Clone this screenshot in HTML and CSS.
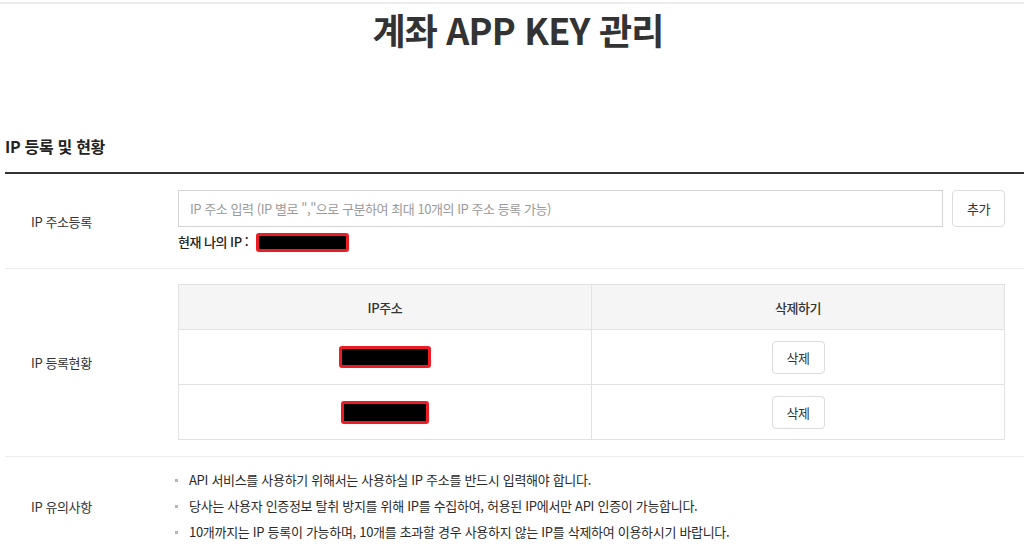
FILE: index.html
```html
<!DOCTYPE html>
<html lang="ko">
<head>
<meta charset="utf-8">
<title>계좌 APP KEY 관리</title>
<link rel="stylesheet" href="styles.css">
</head>
<body>
<div class="topline"></div>
<h1 class="page-title">계좌 APP KEY 관리</h1>
<h2 class="section-title">IP 등록 및 현황</h2>
<div class="form">
  <div class="row row-register">
    <div class="label">IP 주소등록</div>
    <div class="content">
      <div class="input-line">
        <input class="ip-input" type="text" placeholder="IP 주소 입력 (IP 별로 &quot;,&quot;으로 구분하여 최대 10개의 IP 주소 등록 가능)">
        <button class="btn btn-add">추가</button>
      </div>
      <div class="my-ip">현재 나의 IP : <span class="redact redact-a"></span></div>
    </div>
  </div>
  <div class="row row-list">
    <div class="label">IP 등록현황</div>
    <div class="content">
      <table class="ip-table">
        <thead>
          <tr><th>IP주소</th><th>삭제하기</th></tr>
        </thead>
        <tbody>
          <tr class="r1"><td><span class="redact redact-b"></span></td><td><button class="btn btn-del">삭제</button></td></tr>
          <tr class="r2"><td><span class="redact redact-c"></span></td><td><button class="btn btn-del">삭제</button></td></tr>
        </tbody>
      </table>
    </div>
  </div>
  <div class="row row-notice">
    <div class="label">IP 유의사항</div>
    <div class="content">
      <ul class="notes">
        <li>API 서비스를 사용하기 위해서는 사용하실 IP 주소를 반드시 입력해야 합니다.</li>
        <li>당사는 사용자 인증정보 탈취 방지를 위해 IP를 수집하여, 허용된 IP에서만 API 인증이 가능합니다.</li>
        <li>10개까지는 IP 등록이 가능하며, 10개를 초과할 경우 사용하지 않는 IP를 삭제하여 이용하시기 바랍니다.</li>
      </ul>
    </div>
  </div>
</div>
</body>
</html>
```
FILE: styles.css
```css
* { box-sizing: border-box; }
html, body { margin: 0; padding: 0; background: #fff; }
body {
  font-family: "Noto Sans CJK KR", "Noto Sans", sans-serif;
  color: #333;
  font-size: 13px;
  overflow: hidden;
}
.topline {
  margin-top: 2px;
  height: 2px;
  background: #ebebeb;
}
.page-title {
  margin: 0;
  padding-top: 5px;
  padding-left: 12px;
  font-size: 36px;
  line-height: 40px;
  font-weight: 700;
  text-align: center;
  letter-spacing: -0.8px;
  color: #333;
}
.section-title {
  margin: 87px 0 16px 5px;
  font-size: 16px;
  line-height: 20px;
  font-weight: 700;
  letter-spacing: -0.3px;
  color: #222;
}
.form {
  margin-left: 5px;
  border-top: 2px solid #333;
}
.row {
  display: flex;
  align-items: center;
  border-bottom: 1px solid #ececec;
  padding-right: 19px;
}
.label {
  width: 173px;
  flex: none;
  padding-left: 26px;
  letter-spacing: -0.4px;
  color: #333;
}
.content { flex: 1; min-width: 0; }
.row-register { padding-top: 16px; padding-bottom: 16px; }
.input-line { display: flex; gap: 9px; }
.ip-input {
  flex: 1;
  height: 37px;
  border: 1px solid #d4d4d4;
  padding: 0 11px;
  font-family: inherit;
  font-size: 13px;
  letter-spacing: -0.45px;
  color: #333;
  outline: none;
}
.ip-input::placeholder { color: #9a9a9a; }
.btn {
  width: 53px;
  background: #fff;
  border: 1px solid #dcdcdc;
  border-radius: 4px;
  font-family: inherit;
  font-size: 13px;
  color: #333;
  letter-spacing: -0.5px;
  padding: 0;
  cursor: pointer;
}
.btn-add { height: 37px; }
.btn-del { height: 33px; }
.my-ip {
  margin-top: 5px;
  height: 20px;
  line-height: 20px;
  font-weight: 500;
  letter-spacing: -0.5px;
  display: flex;
  align-items: center;
  gap: 8px;
  color: #222;
}
.redact {
  display: inline-block;
  background: #000;
  border: 3px solid #ec1c24;
  border-radius: 3px;
}
.redact-a { width: 93px; height: 19px; }
.redact-b { width: 92px; height: 22px; }
.redact-c { width: 88px; height: 23px; }
.row-list { padding-top: 15px; padding-bottom: 16px; }
.ip-table {
  width: 100%;
  border-collapse: collapse;
  table-layout: fixed;
  border: 1px solid #e2e2e2;
}
.ip-table th, .ip-table td {
  border: 1px solid #e2e2e2;
  text-align: center;
  vertical-align: middle;
  padding: 0;
}
.ip-table th {
  background: #f5f5f5;
  height: 45px;
  font-weight: 500;
  letter-spacing: -0.4px;
  color: #333;
}
.ip-table td { height: 55px; }
.ip-table td .redact { vertical-align: middle; }
.row-notice { padding-top: 10px; padding-bottom: 10px; border-bottom: none; }
.notes {
  list-style: none;
  margin: 0 0 0 -3px;
  padding: 0;
}
.notes li {
  display: flex;
  align-items: center;
  line-height: 26px;
  letter-spacing: -0.3px;
  color: #2a2a2a;
}
.notes li::before {
  content: "";
  width: 3px;
  height: 3px;
  background: #b5b5b5;
  margin-right: 11px;
  flex: none;
}
```
